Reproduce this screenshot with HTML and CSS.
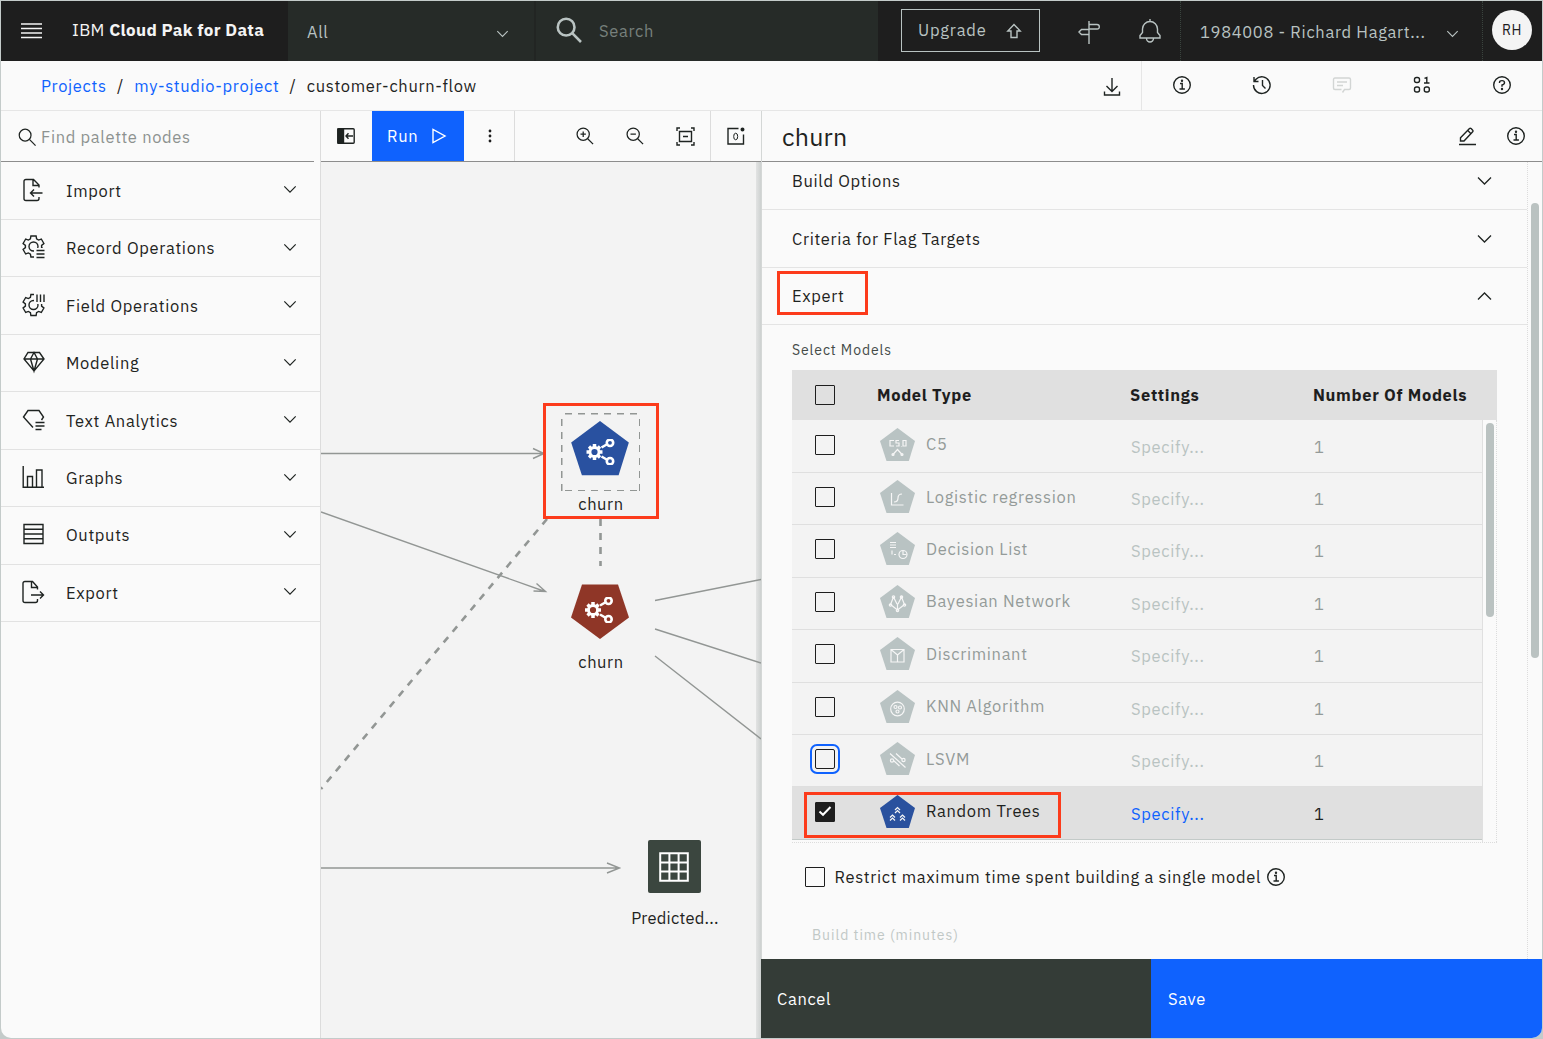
FILE: index.html
```html
<!DOCTYPE html>
<html lang="en">
<head>
<meta charset="utf-8">
<title>customer-churn-flow</title>
<link rel="stylesheet" href="styles.css">
</head>
<body>
<svg class="sprite" aria-hidden="true">
  <symbol id="chevron" viewBox="0 0 16 10"><path d="M1.5 1.5 8 8l6.500-6.500"/></symbol>
  <symbol id="search" viewBox="0 0 20 20"><circle cx="7.500" cy="7.500" r="6.200"/><path d="m12 12 6.500 6.500"/></symbol>
  <symbol id="info" viewBox="0 0 20 20"><circle cx="10" cy="10" r="8.300"/><path d="M8 8.500h2.200v5.300M7.500 14h5.400"/><circle class="solid" cx="10" cy="5.800" r=".5"/></symbol>
  <symbol id="gear" viewBox="-12 -12 24 24"><path id="gearpath" d="M8.100 1.150 10.400 3 7.800 7.500 5.050 6.450 3.070 7.600 2.600 10.500-2.600 10.500-3.070 7.600-5.050 6.450-7.800 7.500-10.400 3-8.100 1.150-8.100-1.150-10.400-3-7.800-7.500-5.050-6.450-3.070-7.600-2.600-10.500 2.600-10.500 3.070-7.600 5.050-6.450 7.800-7.500 10.400-3 8.100-1.150Z"/></symbol>
  <symbol id="flowmodel" viewBox="0 0 30 26">
    <g transform="translate(9 13) scale(.74)"><path class="cog" fill-rule="evenodd" d="M7.650-2.340 10.800-2.400 10.800 2.400 7.650 2.340 7.060 3.750 9 5.870 5.870 9 3.750 7.060 2.340 7.650 2.400 10.800-2.400 10.800-2.340 7.650-3.750 7.060-5.870 9-9 5.870-7.060 3.750-7.650 2.340-10.800 2.400-10.800-2.400-7.650-2.340-7.060-3.750-9-5.870-5.870-9-3.750-7.060-2.340-7.650-2.400-10.800 2.400-10.800 2.340-7.650 3.750-7.060 5.870-9 9-5.870 7.060-3.750ZM4.200 0A4.200 4.200 0 1 0-4.200 0 4.200 4.200 0 1 0 4.200 0Z"/></g>
    <path d="m16 8.500 6-3.500M16 17.500l6 3.500"/><circle cx="24.500" cy="3.800" r="3.200"/><circle cx="24.500" cy="22.200" r="3.200"/>
  </symbol>
  <symbol id="pentagon" viewBox="0 0 35 34"><path d="M17.500 0 35 13 28.800 33H6.500L0 13Z"/></symbol>
</svg>

<div class="window">
  <header class="topbar">
    <div class="brand">
      <svg class="ico menu" width="22" height="16"><path d="M0 1h21M0 5.500h21M0 10h21M0 14.500h21"/></svg>
      <div class="brand-name">IBM <b>Cloud Pak for Data</b></div>
    </div>
    <div class="scope"><span>All</span><svg class="ico" width="13" height="8"><use href="#chevron"/></svg></div>
    <div class="global-search"><svg class="ico" width="27" height="27"><use href="#search"/></svg><span>Search</span></div>
    <div class="top-actions">
      <div class="upgrade"><span>Upgrade</span>
        <svg class="ico" width="16" height="16" viewBox="0 0 16 16"><path d="M8 1.500 1.800 8H5v6.500h6V8h3.200Z"/></svg></div>
      <svg class="ico sign" width="22" height="23" viewBox="0 0 22 23"><path d="M11 0v23M11 3.500h8q2.300 0 2.300 2.300T19 8h-8zM11 8.500H3.500L1 11l2.500 2.500H11z"/></svg>
      <svg class="ico bell" width="22" height="24" viewBox="0 0 22 24"><path d="M11 0v2.500M1 19v-2.500l2.500-3V10a7.500 7.500 0 0 1 15 0v3.500l2.500 3V19ZM7.500 19.500a3.500 3.500 0 0 0 7 0"/></svg>
    </div>
    <div class="account"><span>1984008 - Richard Hagart...</span><svg class="ico" width="13" height="8"><use href="#chevron"/></svg></div>
    <div class="user"><span class="avatar">RH</span></div>
  </header>

  <nav class="crumbs">
    <div class="trail"><a>Projects</a><i>/</i><a>my-studio-project</a><i>/</i><span>customer-churn-flow</span></div>
    <div class="download"><svg class="ico" width="18" height="20" viewBox="0 0 18 20"><path d="M9 1v13M3.500 9 9 14.500 14.500 9M1.500 14.500V18h15v-3.500"/></svg></div>
    <div class="tools">
      <span><svg class="ico" width="20" height="20"><use href="#info"/></svg></span>
      <span><svg class="ico" width="20" height="20" viewBox="0 0 20 20"><path d="M1.500 10A8.300 8.300 0 1 0 4 4.200L2.500 6M2 2v4.500h4.500M10.500 5v5.500l3 3"/></svg></span>
      <span class="off"><svg class="ico" width="20" height="20" viewBox="0 0 20 20"><path d="M10.500 17.500 12.500 14.500H17q1.500 0 1.500-1.500V4.500Q18.500 3 17 3H3Q1.500 3 1.500 4.500V13q0 1.500 1.500 1.500h6.500M5 7h10M5 10.500h6"/></svg></span>
      <span><svg class="ico" width="20" height="20" viewBox="0 0 20 20"><rect x="2.500" y="2.500" width="5" height="5" rx="2"/><path d="M12.500 3.300 14.800 2.500V8M12 8h5.500"/><rect x="2.500" y="12" width="5" height="5" rx="2"/><rect x="12.300" y="12" width="5" height="5" rx="2"/></svg></span>
      <span><svg class="ico" width="20" height="20" viewBox="0 0 20 20"><circle cx="10" cy="10" r="8.300"/><path d="M7.500 8V7.500Q7.500 5.600 10 5.600t2.500 2-2.500 2.400v1.700"/><circle class="solid" cx="10" cy="14" r=".5"/></svg></span>
    </div>
  </nav>

  <div class="workspace">
    <aside class="palette">
      <div class="find"><svg class="ico" width="19" height="19"><use href="#search"/></svg><span>Find palette nodes</span></div>
      <div class="cats">
      <div class="cat"><svg class="ico" width="24" height="24" viewBox="0 0 24 24"><path d="M17 19v1.500q0 2-2 2H4q-2 0-2-2V3.500q0-2 2-2h7.500L17 7v2.500M11 1.500V7.500h6M8.500 15H20.500M12 11.500 8.500 15l3.500 3.500"/></svg><span>Import</span><svg class="ico chev" width="14" height="9"><use href="#chevron"/></svg></div>
      <div class="cat"><svg class="ico" width="24" height="24" viewBox="0 0 24 24"><clipPath id="cr"><path d="M0 0h24v13H12V24H0z"/></clipPath><g clip-path="url(#cr)"><use href="#gearpath" x="11.500" y="11.500"/><circle cx="11.500" cy="11.500" r="4.500"/></g><path d="M14.500 15.500h8M14.500 19h8M14.500 22.500h8"/></svg><span>Record Operations</span><svg class="ico chev" width="14" height="9"><use href="#chevron"/></svg></div>
      <div class="cat"><svg class="ico" width="24" height="24" viewBox="0 0 24 24"><clipPath id="cf"><path d="M0 0h12v11h12V24H0z"/></clipPath><g clip-path="url(#cf)"><use href="#gearpath" x="11.500" y="12"/><circle cx="11.500" cy="12" r="4.500"/></g><path d="M15 1.500V9M18.500 1.500V9M22 1.500V9"/></svg><span>Field Operations</span><svg class="ico chev" width="14" height="9"><use href="#chevron"/></svg></div>
      <div class="cat"><svg class="ico" width="24" height="24" viewBox="0 0 24 24"><path d="M6 2.500h11.500L22 9 12 21 2 9ZM2 9H22M12 2.500 8.500 9 12 21 15.500 9Z"/></svg><span>Modeling</span><svg class="ico chev" width="14" height="9"><use href="#chevron"/></svg></div>
      <div class="cat"><svg class="ico" width="24" height="24" viewBox="0 0 24 24"><path d="M11 19.500 1.500 9 6 2.500h11L21.500 9l-2 3M13.500 14.500h9M13.500 18h9M13.500 21.500h6"/></svg><span>Text Analytics</span><svg class="ico chev" width="14" height="9"><use href="#chevron"/></svg></div>
      <div class="cat"><svg class="ico" width="24" height="24" viewBox="0 0 24 24"><path d="M1.200 1v21.300H22M5.500 22V11.500h5V22M14.500 22V5h5.500v17"/></svg><span>Graphs</span><svg class="ico chev" width="14" height="9"><use href="#chevron"/></svg></div>
      <div class="cat"><svg class="ico" width="24" height="24" viewBox="0 0 24 24"><path d="M2 2.500h19v19H2ZM2 7.300h19M2 12h19M2 16.800h19"/></svg><span>Outputs</span><svg class="ico chev" width="14" height="9"><use href="#chevron"/></svg></div>
      <div class="cat"><svg class="ico" width="24" height="24" viewBox="0 0 24 24"><path d="M15.500 19v1.500q0 2-2 2H3q-2 0-2-2V3.500q0-2 2-2h7.500L15.500 7v2.500M9.500 1.500V7.500h6M9 15h12.500M18 11.500 21.500 15 18 18.500"/></svg><span>Export</span><svg class="ico chev" width="14" height="9"><use href="#chevron"/></svg></div>
      </div>
    </aside>

    <main class="flow">
      <div class="toolbar">
        <span class="tb"><svg width="18" height="16" viewBox="0 0 18 16" class="ico"><rect x=".8" y=".8" width="16.400" height="14.400" rx="1"/><path class="solid" d="M1 1h5.500v14H1z"/><path d="M9 8h7M11.500 5.300 9 8l2.500 2.700"/></svg></span>
        <span class="run"><span>Run</span><svg class="ico" width="14" height="16" viewBox="0 0 14 16"><path d="M1 1.500v13L13 8Z"/></svg></span>
        <span class="tb more"><svg width="4" height="14" viewBox="0 0 4 14"><circle cx="2" cy="2" r="1.400"/><circle cx="2" cy="7" r="1.400"/><circle cx="2" cy="12" r="1.400"/></svg></span>
        <span class="tb zoom-in"><svg class="ico" width="18" height="18" viewBox="0 0 20 20"><circle cx="8" cy="8" r="6.800"/><path d="m13 13 6 6M8 5v6M5 8h6"/></svg></span>
        <span class="tb"><svg class="ico" width="18" height="18" viewBox="0 0 20 20"><circle cx="8" cy="8" r="6.800"/><path d="m13 13 6 6M5 8h6"/></svg></span>
        <span class="tb"><svg class="ico" width="19" height="19" viewBox="0 0 19 19"><path d="M1 4V1h3M15 1h3v3M18 15v3h-3M4 18H1v-3M3.500 4.500h12v10h-12zM7 9.500h5"/></svg></span>
        <span class="tb alerts"><svg class="ico" width="18" height="18" viewBox="0 0 18 18"><path d="M11.500 1.500H1V17h15.500V7.500"/><ellipse class="thin" cx="8.700" cy="9.500" rx="2" ry="3.300"/><circle class="solid" cx="15.500" cy="2.500" r="1.300"/></svg></span>
      </div>
      <div class="canvas">
        <svg class="links" width="440" height="877" viewBox="321 162 440 877">
          <path d="M321 453.500H544M533 448.500l11 5-11 5M321 512l224 79.500M536.500 583.500l9 8-12-.5M655 600.500l106-21M655 629l106 34M655 656l106 83M321 868H619M607 863l12.500 5-12.500 5"/>
          <path class="assoc" d="M547 519 321 789M600.500 519v47"/>
        </svg>
        <div class="node churn-a">
          <svg width="58" height="56"><use class="pent" href="#pentagon" width="58" height="56"/><use class="glyph" href="#flowmodel" x="14.500" y="18" width="30" height="26"/></svg>
        </div>
        <div class="label churn-a-label">churn</div>
        <div class="node churn-b">
          <svg width="58" height="56"><path class="pent" d="M11 0.500h36L58 33.500 29 55 0 33.500Z"/><use class="glyph" href="#flowmodel" x="13" y="13" width="30" height="26"/></svg>
        </div>
        <div class="label churn-b-label">churn</div>
        <div class="node table-node"><svg width="30" height="30" viewBox="0 0 30 30"><path d="M1.200 1.200h27.600v27.600H1.200zM1 10.400h28M1 19.600h28M10.400 1v28M19.600 1v28"/></svg></div>
        <div class="label table-label">Predicted...</div>
        <div class="mark mark-node"></div>
      </div>
    </main>

    <section class="panel">
      <div class="panel-title">
        <h1>churn</h1>
        <svg class="ico" width="19" height="19" viewBox="0 0 19 19"><path d="M1 17.500h17M2.500 14V10.800L11.500 1.600q.8-.8 1.600 0l1.600 1.600q.8.8 0 1.600L6 14ZM9.800 3.600 13 6.800"/></svg>
        <svg class="ico" width="20" height="20"><use href="#info"/></svg>
      </div>
      <div class="panel-body">
        <div class="scroll-area">
          <div class="acc first"><span>Build Options</span><svg class="ico" width="17" height="10"><use href="#chevron"/></svg></div>
          <div class="acc crit"><span>Criteria for Flag Targets</span><svg class="ico" width="17" height="10"><use href="#chevron"/></svg></div>
          <div class="acc"><span>Expert</span><svg class="ico up" width="17" height="10"><use href="#chevron"/></svg><div class="mark mark-expert"></div></div>
          <div class="caption">Select Models</div>
          <div class="models">
            <div class="mrow mhead"><i class="box"></i><b class="h1">Model Type</b><b class="h2">Settings</b><b class="h3">Number Of Models</b></div>
            <div class="mbody">
              <div class="rows">
                <div class="mrow"><i class="box"></i><svg class="pico" viewBox="0 0 35 34"><use href="#pentagon"/><path d="M14 12.500h-4v5.500h4M19 12.500h-3v2.500h3v3h-3M21.500 18v.5M23 12.500h3V18h-3zM12.500 27l5-5.500 5 5.500"/><circle cx="13" cy="26.500" r="1"/><circle cx="22" cy="26.500" r="1"/></svg><span class="name">C5</span><span class="spec">Specify...</span><span class="num">1</span></div>
                <div class="mrow"><i class="box"></i><svg class="pico" viewBox="0 0 35 34"><use href="#pentagon"/><path d="M11.500 13v12h12M14 22q4 0 4-4t4-4"/></svg><span class="name">Logistic regression</span><span class="spec">Specify...</span><span class="num">1</span></div>
                <div class="mrow"><i class="box"></i><svg class="pico" viewBox="0 0 35 34"><use href="#pentagon"/><path d="M10 10.500h6M10 13h6M10 15.500h6M12 18.500v4M14 22.500h2"/><circle cx="23" cy="22.500" r="4"/><path d="M23 19v3.500h3.500"/></svg><span class="name">Decision List</span><span class="spec">Specify...</span><span class="num">1</span></div>
                <div class="mrow"><i class="box"></i><svg class="pico" viewBox="0 0 35 34"><use href="#pentagon"/><path d="M13.500 12 10.500 19.500 17.500 25 24.500 19.500 21.500 12 18 19M13.500 12 17 19M17.500 25v-6"/><circle cx="13.500" cy="12" r="1.200"/><circle cx="21.500" cy="12" r="1.200"/><circle cx="10.500" cy="20" r="1.200"/><circle cx="24.500" cy="20" r="1.200"/><circle cx="17.500" cy="25.500" r="1.200"/></svg><span class="name">Bayesian Network</span><span class="spec">Specify...</span><span class="num">1</span></div>
                <div class="mrow"><i class="box"></i><svg class="pico" viewBox="0 0 35 34"><use href="#pentagon"/><path d="M11 12.500h13v12.500H11zM11 12.500l6.500 5.500L24 12.500M17.500 18v7"/></svg><span class="name">Discriminant</span><span class="spec">Specify...</span><span class="num">1</span></div>
                <div class="mrow"><i class="box"></i><svg class="pico" viewBox="0 0 35 34"><use href="#pentagon"/><circle cx="17.500" cy="19" r="6.800"/><circle cx="15.500" cy="17" r="1.500"/><circle cx="20" cy="17.500" r="1.500"/><circle cx="17.500" cy="21.500" r="1.500"/></svg><span class="name">KNN Algorithm</span><span class="spec">Specify...</span><span class="num">1</span></div>
                <div class="mrow"><i class="box focus"></i><svg class="pico" viewBox="0 0 35 34"><use href="#pentagon"/><path d="M10 11.500 25.500 25.500M13.500 18.500l6 5.500M16 11.500l6 5.500"/><circle cx="12" cy="18.500" r="1.600"/><circle cx="23.500" cy="18" r="1.600"/></svg><span class="name">LSVM</span><span class="spec">Specify...</span><span class="num">1</span></div>
                <div class="mrow on"><i class="box checked"><svg width="14" height="12" viewBox="0 0 14 12"><path d="m1.500 6.500 3.500 3.300L12.500 2"/></svg></i><svg class="pico" viewBox="0 0 35 34"><use href="#pentagon"/><path d="m15 15 2.500-2.500L20 15M15 18l2.500-2.500L20 18M10 22.500l2.500-2.500 2.500 2.500M10 25.500 12.500 23l2.500 2.500M20 22.500l2.500-2.500 2.500 2.500M20 25.500l2.500-2.500 2.500 2.500"/></svg><span class="name">Random Trees</span><span class="spec">Specify...</span><span class="num">1</span><div class="mark mark-row"></div></div>
              </div>
              <div class="track"><div class="thumb"></div></div>
            </div>
          </div>
          <div class="restrict"><i class="box"></i><span>Restrict maximum time spent building a single model</span><svg class="ico" width="20" height="20"><use href="#info"/></svg></div>
          <div class="build-time">Build time (minutes)</div>
        </div>
        <div class="panel-track"><div class="thumb"></div></div>
      </div>
      <div class="actions"><div class="cancel">Cancel</div><div class="save">Save</div></div>
    </section>
  </div>
</div>
</body>
</html>
```
FILE: styles.css
```css
* { box-sizing: border-box; }
body {
  margin: 0;
  width: 1543px;
  height: 1039px;
  overflow: hidden;
  background: #c4cbca;
  font: 16.5px/20px "IBM Plex Sans", Roboto, "Liberation Sans", sans-serif;
  letter-spacing: .67px;
  color: #1e2321;
}
svg { display: block; flex: none; }
i { font-style: normal; }
span, a { white-space: nowrap; }
.sprite { position: absolute; width: 0; height: 0; }
.ico { fill: none; stroke: currentColor; stroke-width: 1.4; overflow: visible; }
.solid { fill: currentColor; }
.thin { stroke-width: 1; }

.window {
  display: flex;
  flex-direction: column;
  width: 1541px;
  height: 1037px;
  margin: 1px;
  background: #fafafa;
  border-radius: 0 0 10px 10px;
  overflow: hidden;
}

/* top bar */
.topbar { display: flex; height: 60px; background: #1e1e1e; color: #b9c3c2; }
.brand { display: flex; width: 287px; padding: 22px 0 0 20px; color: #f4f4f4; }
.menu { stroke-width: 1.5; }
.brand-name { margin: -3px 0 0 29px; font-size: 17px; letter-spacing: .35px; white-space: nowrap; }
.brand-name b { font-weight: 700; }
.scope, .global-search { display: flex; background: #262b28; }
.scope { width: 248px; padding: 21px 25px 0 19px; justify-content: space-between; border-right: 2px solid #222523; }
.scope .ico { margin-top: 8px; }
.global-search { width: 342px; padding: 16px 0 0 20px; color: #77807c; }
.global-search .ico { color: #b9c3c2; stroke-width: 1.9; }
.global-search span { margin: 4px 0 0 16px; }
.top-actions { display: flex; width: 303px; padding-left: 23px; border-right: 1px dotted #3a443e; }
.upgrade { display: flex; justify-content: space-between; width: 139px; height: 43px; margin-top: 8px; padding: 10px 17px 0 16px; border: 1px solid #b9c3c2; letter-spacing: .8px; }
.upgrade .ico { margin-top: 3px; }
.sign { margin: 20px 0 0 38px; }
.bell { margin: 18px 0 0 39px; }
.account { display: flex; justify-content: space-between; width: 302px; padding: 21px 23px 0 19px; border-right: 1px dotted #3a443e; }
.account .ico { margin-top: 8px; }
.user { padding: 9px 0 0 9px; }
.avatar { display: block; width: 40px; height: 40px; border-radius: 50%; background: #f4f4f4; color: #1e1e1e; font-size: 14px; line-height: 41px; text-align: center; }

/* breadcrumb row */
.crumbs { display: flex; height: 50px; border-bottom: 1px solid #e6e6e6; }
.trail { display: flex; width: 1082px; padding: 15px 0 0 40px; }
.trail a { color: #0f62fe; }
.trail i { width: 27.500px; text-align: center; }
.download { display: flex; width: 60px; padding: 16px 0 0 21px; border-right: 1px solid #e6e6e6; }
.tools { display: flex; }
.tools span { display: flex; width: 80px; justify-content: center; padding-top: 14px; }
.tools .off { color: #d2d5d4; }

/* workspace */
.workspace { display: flex; flex: 1; min-height: 0; }
.palette { width: 320px; border-right: 1px solid #dcdcdc; }
.find { display: flex; width: 313px; height: 51px; padding: 17px 0 0 17px; border-bottom: 1px solid #8d8d8d; }
.find .ico { stroke-width: 1.3; }
.find span { margin: -1px 0 0 4px; color: #8d9290; }
.cats { padding-top: .6px; }
.cat { display: flex; align-items: center; height: 57.450px; padding: 0 23px 2px 21px; border-bottom: 1px solid #e2e2e2; }
.cat span { flex: 1; margin: 2px 0 0 20px; }

.flow { display: flex; flex-direction: column; width: 440px; }
.toolbar { display: flex; height: 51px; border-bottom: 1px solid #8d8d8d; }
.tb { display: flex; width: 50px; align-items: center; justify-content: center; }
.run { display: flex; width: 92px; margin-left: 1px; padding: 15px 18px 0 15px; justify-content: space-between; background: #0f62fe; color: #fff; }
.run .ico { margin-top: 2px; }
.more { width: 51px; padding-left: 2px; border-right: 1px solid #dcdcdc; fill: #1e1e1e; }
.zoom-in { margin-left: 45px; }
.alerts { width: 51px; border-left: 1px solid #dcdcdc; }
.canvas { position: relative; flex: 1; background: #f3f3f3; overflow: hidden; }
.canvas::before { content: ""; position: absolute; top: 0; right: 0; bottom: 0; width: 5px; background: linear-gradient(90deg, #e2e3e3, #cdd1d0); }
.links { position: absolute; left: 0; top: 0; fill: none; stroke: #929694; stroke-width: 1.4; }
.assoc { stroke-width: 2.600; stroke-dasharray: 7 7; }
.node, .label, .mark { position: absolute; }
.churn-a { left: 240px; top: 251px; width: 79px; height: 78px; padding: 8px 0 0 10px; background:
  repeating-linear-gradient(90deg, #929694 0 7px, transparent 7px 13px) 4px 0 / 100% 1.500px no-repeat,
  repeating-linear-gradient(90deg, #929694 0 7px, transparent 7px 13px) 4px 100% / 100% 1.500px no-repeat,
  repeating-linear-gradient(0deg, #929694 0 7px, transparent 7px 13px) 0 0 / 1.500px 100% no-repeat,
  repeating-linear-gradient(0deg, #929694 0 7px, transparent 7px 13px) 100% 0 / 1.500px 100% no-repeat; }
.churn-b { left: 250px; top: 422px; }
.churn-a .pent { fill: #2951a0; }
.churn-b .pent { fill: #8f3627; }
.glyph { fill: none; stroke: #fff; stroke-width: 2.600; }
.cog { fill: #fff; stroke: none; }
.label { width: 120px; text-align: center; white-space: nowrap; letter-spacing: .6px; }
.churn-a-label { left: 220px; top: 332px; }
.churn-b-label { left: 220px; top: 490px; }
.table-node { left: 327px; top: 678px; width: 53px; height: 53px; padding: 12px 11px; border-radius: 2px; background: #3b463f; }
.table-node svg { fill: none; stroke: #fff; stroke-width: 2; }
.table-label { left: 294px; top: 746px; letter-spacing: .25px; }
.mark { border: 3px solid #fc3b1b; }
.mark-node { left: 222px; top: 241px; width: 116px; height: 116px; }
.mark-expert { left: 15px; top: 3px; width: 91px; height: 44px; }
.mark-row { left: 12px; top: 5px; width: 257px; height: 46px; }

/* properties panel */
.panel { display: flex; flex-direction: column; width: 781px; border-left: 1px solid #d4d7d6; }
.panel-title { display: flex; width: 781px; height: 51px; padding: 16px 17px 0 20px; border-bottom: 1px solid #8d8d8d; }
.panel-title h1 { flex: 1; margin: -5px 0 0; font-size: 25px; line-height: 30px; font-weight: 400; letter-spacing: .2px; }
.panel-title .ico + .ico { margin-left: 29px; margin-top: -1px; }
.panel-body { display: flex; flex: 1; min-height: 0; overflow: hidden; }
.scroll-area { width: 766px; border-right: 1px dotted #dcdcdc; }
.acc { position: relative; display: flex; justify-content: space-between; height: 57.500px; padding: 18px 34px 0 30px; border-bottom: 1px solid #e4e4e4; }
.acc .ico { margin-top: 5px; stroke-width: 1.3; }
.acc.first { height: 48px; padding-top: 9px; }
.acc.crit { padding-top: 19px; }
.up { transform: scaleY(-1); }
.caption { margin: 16px 0 0 30px; font-size: 14px; line-height: 18px; letter-spacing: .9px; color: #444b48; }
.models { width: 705px; margin: 11px 0 0 30px; }
.box { display: block; flex: none; width: 20px; height: 20px; margin-left: 23px; border: 1.500px solid #1e1e1e; border-radius: 1px; }
.focus { outline: 2.500px solid #0f62fe; outline-offset: 3px; border-radius: 2px; }
.checked { background: #1e1e1e; }
.checked svg { margin: 2px; fill: none; stroke: #fff; stroke-width: 2; }
.rows { padding-top: .4px; }
.mrow { position: relative; display: flex; align-items: center; height: 52.430px; padding-bottom: 3px; border-bottom: 1px solid #dfdfdf; background: #f3f3f3; color: #949b99; }
.mhead { height: 50px; padding: 0; border: 0; background: #e0e0e0; color: #1e1e1e; }
.mhead b { font-weight: 700; white-space: nowrap; }
.h1 { width: 253px; margin-left: 42px; }
.h2 { width: 183px; }
.mbody { display: flex; height: 423px; border-bottom: 1px dotted #dcdcdc; }
.rows { width: 691px; border-right: 1px solid #e0e0e0; }
.pico { width: 35px; height: 34px; margin-left: 44.500px; fill: #b9c3c3; stroke: none; }
.pico path, .pico circle { fill: none; stroke: #f6f6f6; stroke-width: 1.200; }
.pico use { stroke: none; }
.name { width: 205px; margin: -1px 0 0 11.500px; }
.spec { width: 183px; margin-top: 4px; color: #b9c3c2; }
.num { margin-top: 4px; }
.on { background: #e0e0e0; color: #1e2321; border-color: #c3cac8; }
.on .spec { color: #0f62fe; }
.on .pico { fill: #2a519e; }
.track { width: 14px; padding: 3px 0 0 3px; border-right: 1px dotted #dcdcdc; }
.thumb { width: 8px; border-radius: 4px; background: #bac2c1; }
.track .thumb { height: 194px; }
.restrict { display: flex; margin: 24px 0 0 43px; }
.restrict .box { margin: 0 9.500px 0 0; }
.restrict .ico { margin-left: 5px; }
.build-time { margin: 39px 0 0 50px; font-size: 14px; line-height: 18px; letter-spacing: .95px; color: #c1c8c6; }
.panel-track { padding: 41px 0 0 3px; }
.panel-track .thumb { height: 455px; }
.actions { display: flex; height: 79px; color: #fff; line-height: 80px; }
.cancel { width: 390px; margin-left: -1px; padding-left: 16px; background: #343c37; }
.save { flex: 1; padding-left: 17px; background: #0f62fe; }
```
